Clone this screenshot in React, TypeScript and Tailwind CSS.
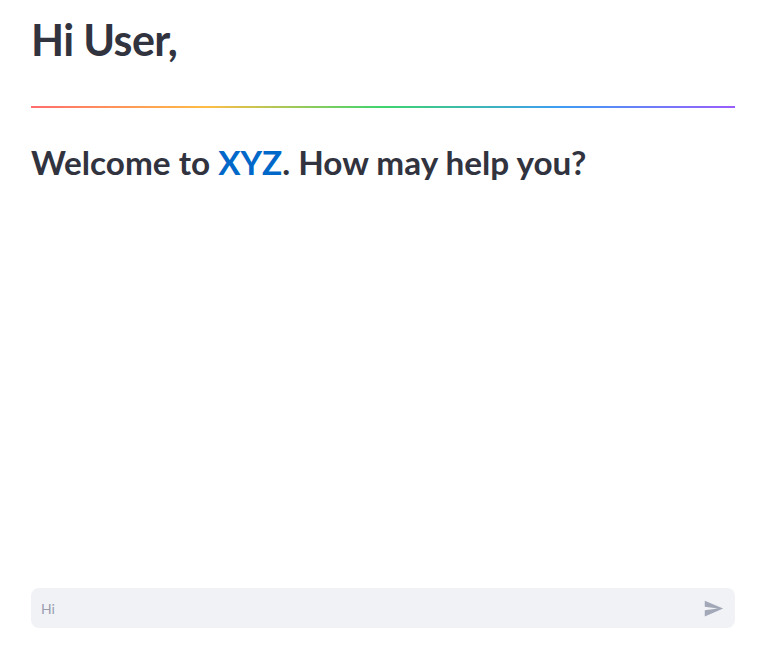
const SendIcon = () => (
  <svg viewBox="0 0 24 24" className="w-[21px] h-[21px] fill-[#a3a8b8]">
    <path d="M2.01 21L23 12 2.01 3 2 10l15 2-15 2z" />
  </svg>
);

const App = () => {
  return (
    <div className="h-[653px] bg-white flex flex-col text-[#31333f] font-['Lato','Noto_Sans',sans-serif]">
      <div className="ml-[31px] w-[704px] flex-1">
        <h1 className="text-[43px] leading-[1.2] font-bold pt-[14px] tracking-[-0.015em]">Hi User,</h1>
        <div className="mt-[40px] h-[2px] bg-[linear-gradient(to_right,#ff6c6c,#ffbd45,#3dd56d,#3d9df3,#9a5dfd)]" />
        <h2 className="mt-[35px] text-[33.3px] leading-[1.2] font-bold">
          Welcome to <span className="text-[#0068c9]">XYZ</span>. How may help you?
        </h2>
      </div>
      <div className="ml-[31px] w-[704px] mb-[25px] h-[40px] rounded-lg bg-[#f0f2f6] flex items-center pl-[10px] pr-[11px]">
        <span className="flex-1 text-[14px] text-[#9a9db0]">Hi</span>
        <SendIcon />
      </div>
    </div>
  );
};

export default App;
